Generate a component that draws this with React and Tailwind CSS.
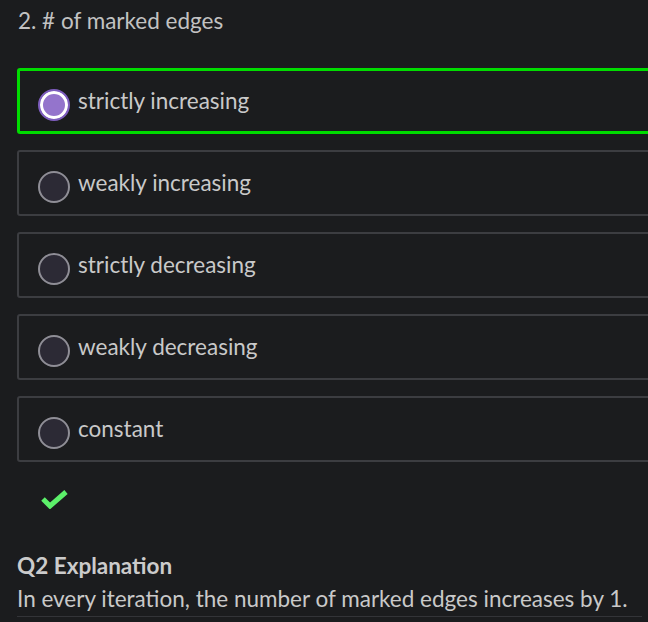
import React, { useState } from 'react';

const opciones = [
  'strictly increasing',
  'weakly increasing',
  'strictly decreasing',
  'weakly decreasing',
  'constant',
];

const Radio = ({ checked }) =>
  checked ? (
    <span className="mt-2 block w-8 h-8 shrink-0 rounded-full border-2 border-[#7d5dbd] bg-[#9474cc] shadow-[inset_0_0_0_3px_#ffffff]" />
  ) : (
    <span className="mt-2 block w-8 h-8 shrink-0 rounded-full border-2 border-[#8f8e96] bg-[#2c2a35]" />
  );

const App = () => {
  const [elegida, setElegida] = useState(0);

  return (
    <div
      className="w-[648px] h-[622px] overflow-hidden bg-[#1b1c1e] text-[#c9c9c9] pl-[17px] pt-[7px]"
      style={{ fontFamily: 'Lato, "Noto Sans", sans-serif' }}
    >
      <h2 className="text-[22.5px] leading-7 text-[#c2c2c2] pl-px">2. # of marked edges</h2>

      {/* Opciones */}
      <div className="mt-[33px] w-[680px] flex flex-col gap-4">
        {opciones.map((op, i) => (
          <div
            key={op}
            onClick={() => setElegida(i)}
            className={
              i === elegida
                ? 'h-[66px] flex items-center pl-[18px] rounded-[3px] border-[3px] border-[#00dc00] cursor-pointer'
                : 'h-[66px] flex items-center pl-[19px] rounded-[3px] border-2 border-[#3c3d41] cursor-pointer'
            }
          >
            <Radio checked={i === elegida} />
            <span className="ml-[8px] text-[22.5px] leading-7">{op}</span>
          </div>
        ))}
      </div>

      <div className="mt-[27px] pl-[24px] h-[20px]">
        <svg width="27" height="20" viewBox="0 0 27 20">
          <polyline points="2,10 9,17 25,3" fill="none" stroke="#5cf06a" strokeWidth="5" strokeLinecap="butt" strokeLinejoin="miter" />
        </svg>
      </div>

      {/* Explicación */}
      <div className="mt-[43px] w-[625px] border-b border-[#333438] pb-[3px]">
        <h3 className="text-[22.5px] leading-7 font-bold text-[#cbcbcb]">Q2 Explanation</h3>
        <p className="text-[22.5px] leading-7 mt-[5px]">
          In every iteration, the number of marked edges increases by 1.
        </p>
      </div>
    </div>
  );
};

export default App;
